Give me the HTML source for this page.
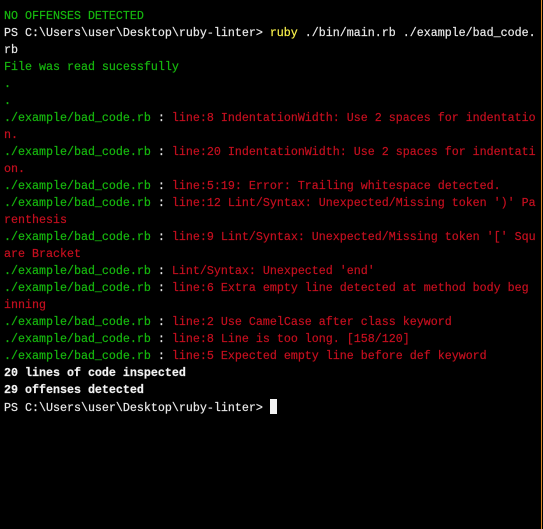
<!DOCTYPE html>
<html><head><style>
html,body{margin:0;padding:0;background:#000;}
body{width:543px;height:529px;overflow:hidden;position:relative;background:#000;}
pre{margin:0;position:absolute;left:4px;top:8px;font-family:"Liberation Mono",monospace;font-size:11.66px;line-height:17px;color:#e8e8e8;white-space:pre;-webkit-text-stroke:0.2px;}
.g{color:#16b80e}.r{color:#c50f1f}.y{color:#f9f14a}.w{color:#f2f2f2;font-weight:bold}
.cur{display:inline-block;width:7px;height:15px;background:#f2f2f2;vertical-align:-3px}
.edge{position:absolute;right:1px;top:0;width:1px;height:529px;background:#e08a2a}
</style></head><body>
<pre><span class="g">NO OFFENSES DETECTED</span>
PS C:\Users\user\Desktop\ruby-linter&gt; <span class="y">ruby</span> ./bin/main.rb ./example/bad_code.
rb
<span class="g">File was read sucessfully</span>
<span class="g">.</span>
<span class="g">.</span>
<span class="g">./example/bad_code.rb</span> : <span class="r">line:8 IndentationWidth: Use 2 spaces for indentatio
n.</span>
<span class="g">./example/bad_code.rb</span> : <span class="r">line:20 IndentationWidth: Use 2 spaces for indentati
on.</span>
<span class="g">./example/bad_code.rb</span> : <span class="r">line:5:19: Error: Trailing whitespace detected.</span>
<span class="g">./example/bad_code.rb</span> : <span class="r">line:12 Lint/Syntax: Unexpected/Missing token ')' Pa
renthesis</span>
<span class="g">./example/bad_code.rb</span> : <span class="r">line:9 Lint/Syntax: Unexpected/Missing token '[' Squ
are Bracket</span>
<span class="g">./example/bad_code.rb</span> : <span class="r">Lint/Syntax: Unexpected 'end'</span>
<span class="g">./example/bad_code.rb</span> : <span class="r">line:6 Extra empty line detected at method body beg
inning</span>
<span class="g">./example/bad_code.rb</span> : <span class="r">line:2 Use CamelCase after class keyword</span>
<span class="g">./example/bad_code.rb</span> : <span class="r">line:8 Line is too long. [158/120]</span>
<span class="g">./example/bad_code.rb</span> : <span class="r">line:5 Expected empty line before def keyword</span>
<span class="w">20 lines of code inspected</span>
<span class="w">29 offenses detected</span>
PS C:\Users\user\Desktop\ruby-linter&gt; <span class="cur"></span></pre>
<div class="edge"></div>
</body></html>
